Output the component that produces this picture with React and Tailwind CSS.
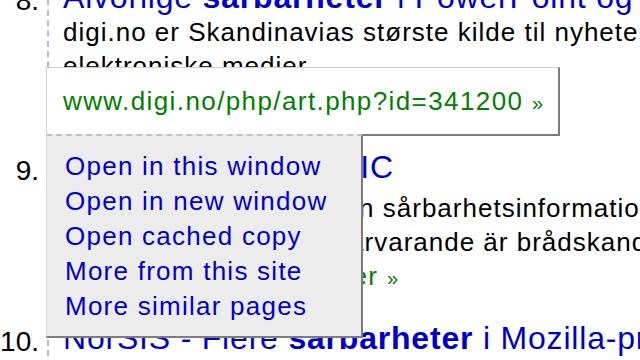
import React from "react";

function Result({ num, title, lines, url, titleGap = "mb-[6px]", className = "" }) {
  return (
    <div className={"flex items-start " + className}>
      <div className="w-[47px] shrink-0 pr-[8px] text-right text-[28px] leading-[44px] text-black">
        {num}
      </div>
      <div className="flex-1 border-l-2 border-dashed border-[#b4bad6] pl-[14px] whitespace-nowrap">
        <div className={"text-[32px] leading-[36px] tracking-[0.8px] text-[#0000cc] " + titleGap}>{title}</div>
        {lines.map((l, i) => (
          <div key={i} className="text-[26px] leading-[34px] tracking-[1px] text-black">
            {l}
          </div>
        ))}
        {url && (
          <div className="text-[26px] leading-[34px] tracking-[1.4px] text-[#008000]">
            {url} <span className="text-[20px]">»</span>
          </div>
        )}
      </div>
    </div>
  );
}

export default function App() {
  const menu = [
    "Open in this window",
    "Open in new window",
    "Open cached copy",
    "More from this site",
    "More similar pages",
  ];
  return (
    <div className="relative w-[640px] h-[360px] overflow-hidden bg-white font-['Liberation_Sans',Arial,sans-serif]">
      <div className="flex flex-col mt-[-21px]">
        <Result
          num="8."
          titleGap="mb-0"
          title={
            <>
              Alvorlige <b>sårbarheter</b> i PowerPoint og Excel
            </>
          }
          lines={[
            "digi.no er Skandinavias største kilde til nyheter om IT og",
            "elektroniske medier.",
          ]}
          url="www.digi.no/php/art.php?id=341200"
        />
        <Result
          num="9."
          className="mt-[30px]"
          title={
            <>
              <b>Sårbarheter</b> på SITIC
            </>
          }
          lines={[
            "Här publicerar SITIC den sårbarhetsinformation som",
            "vilkas åtgärdande för närvarande är brådskande",
          ]}
          url="www.sitic.se/sarbarheter"
        />
        <Result
          num="10."
          className="mt-[25px]"
          title={
            <>
              NorSIS - Flere <b>sårbarheter</b> i Mozilla-produkter
            </>
          }
          lines={["Norsk senter for informasjonssikring varsler om"]}
        />
      </div>

      <div className="absolute left-[46px] top-[67px] w-[514px] flex flex-col">
        <div className="bg-white border-t border-l border-[#d0d0d0] border-r-2 border-r-[#7c7c7c] pt-[16px] pb-[13px] pl-[16px] whitespace-nowrap">
          <div className="text-[26px] leading-[35px] tracking-[1.4px] text-[#008000]">
            www.digi.no/php/art.php?id=341200 <span className="text-[20px]">»</span>
          </div>
        </div>
        <div className="flex items-start">
          <div className="w-[317px] bg-[#ececec] border-solid [border-top-style:dashed] border-t-2 border-t-[#c4c4c4] border-l border-l-[#dadada] border-r-2 border-r-[#7c7c7c] border-b-2 border-b-[#7c7c7c] pt-[13px] pb-[12px] pl-[18px] whitespace-nowrap">
            {menu.map((m) => (
              <div key={m} className="text-[26px] leading-[35px] tracking-[1.25px] text-[#0000cc]">
                {m}
              </div>
            ))}
          </div>
          <div className="flex-1 border-t-2 border-[#7c7c7c]" />
        </div>
      </div>
    </div>
  );
}
